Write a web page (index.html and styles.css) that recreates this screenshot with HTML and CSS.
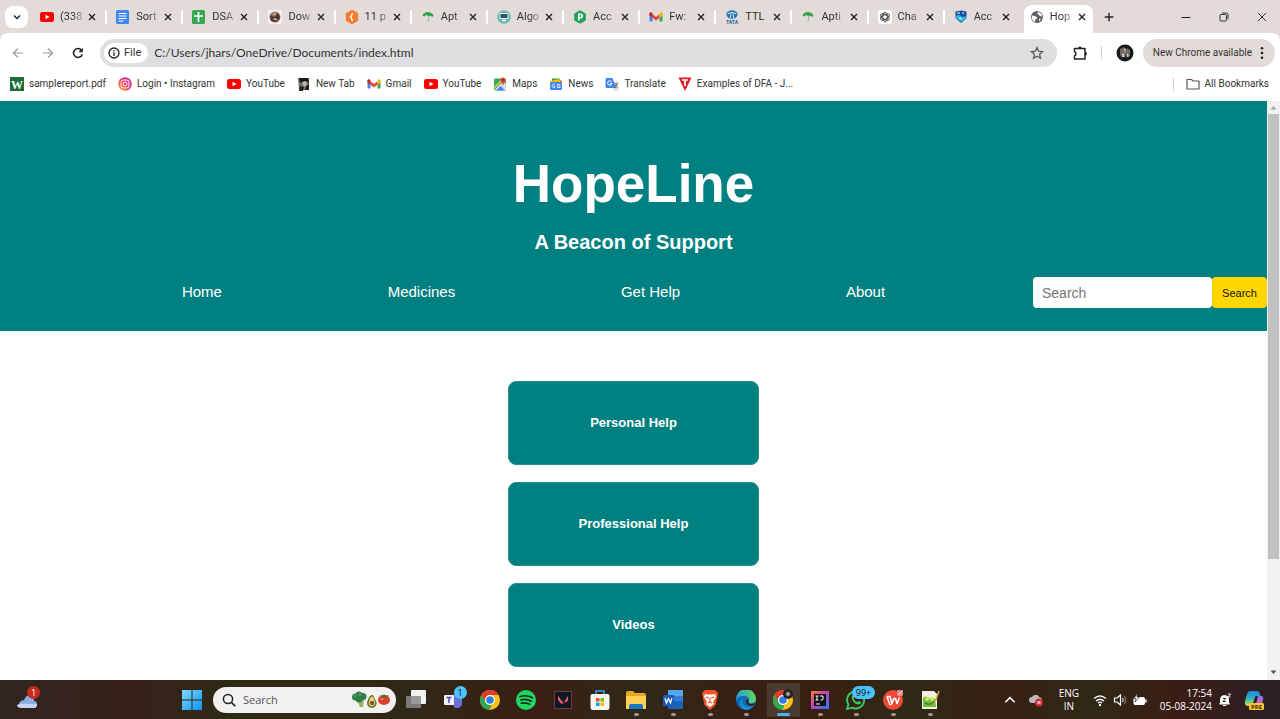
FILE: index.html
```html
<!DOCTYPE html>
<html lang="en">
<head>
<meta charset="utf-8">
<meta name="viewport" content="width=device-width, initial-scale=1">
<title>HopeLine</title>
<link rel="stylesheet" href="styles.css">
</head>
<body>
<svg class="defs" aria-hidden="true">
  <symbol id="close" viewBox="0 0 10 10"><path d="M2 2l6 6M8 2l-6 6" stroke="#222" stroke-width="1.4" fill="none"/></symbol>
  <symbol id="youtube" viewBox="0 0 14 14"><rect y="2" width="14" height="10" rx="2.5" fill="#f00"/><path d="M5.5 4.7v4.6L9.6 7z" fill="#fff"/></symbol>
  <symbol id="gmail" viewBox="0 0 14 14"><path d="M.5 3v7.700a.8.8 0 0 0 .8.8h2.200V5.200z" fill="#4285f4"/><path d="M13.500 3v7.700a.8.8 0 0 1-.8.8h-2.200V5.200z" fill="#34a853"/><path d="M3.500 4.200L7 6.900l3.500-2.700v3.600L7 10.500 3.500 7.800z" fill="#ea4335"/><path d="M.5 3.800c0-1.500 1.600-1.900 2.500-1.100l.5.400v4.700L.5 5.500z" fill="#c5221f"/><path d="M13.500 3.800c0-1.500-1.600-1.900-2.500-1.100l-.5.400v4.700l3-2.300z" fill="#fbbc04"/></symbol>
  <symbol id="umbrella" viewBox="0 0 14 14"><path d="M1.500 5.500C3 1.500 9 .5 12.500 5l-1 2-2.200-1.200-2 .7-2-1.700L3.500 6.500z" fill="#35a04b"/><path d="M7.800 5.500L7 12" stroke="#8cc59a" stroke-width="1"/></symbol>
  <symbol id="chrome" viewBox="0 0 20 20"><circle cx="10" cy="10" r="10" fill="#fbc116"/><path d="M1.340 5A10 10 0 0 1 18.660 5H10a5 5 0 0 0-4.400 7.400z" fill="#e33b2e"/><path d="M1.340 5l4.330 7.500A5 5 0 0 0 11.500 14.800L9.500 20A10 10 0 0 1 1.340 5z" fill="#2da94f"/><circle cx="10" cy="10" r="4.900" fill="#fff"/><circle cx="10" cy="10" r="3.800" fill="#2f7de9"/></symbol>
</svg>

<div class="frame">
<header class="tabstrip">
  <button class="tab-search" aria-label="Search tabs"><svg viewBox="0 0 10 10"><path d="M2 3.500l3 3 3-3" fill="none" stroke="#222" stroke-width="1.500"/></svg></button>
  <div class="tabs">
    <div class="tab"><svg class="fav"><use href="#youtube"/></svg><span class="tab-title">(338</span><button class="x" aria-label="Close tab"><svg><use href="#close"/></svg></button></div>
    <div class="tab"><svg class="fav" viewBox="0 0 14 14"><rect width="13" height="14" rx="1.500" fill="#4285f4"/><path d="M2.500 3.500h8M2.500 6h8M2.500 8.500h8M2.500 11h5" stroke="#fff" stroke-width="1.200"/></svg><span class="tab-title">Sort</span><button class="x" aria-label="Close tab"><svg><use href="#close"/></svg></button></div>
    <div class="tab"><svg class="fav" viewBox="0 0 14 14"><rect width="13" height="14" rx="1.500" fill="#34a853"/><path d="M6.500 2v10M2 6h9" stroke="#fff" stroke-width="1.700"/></svg><span class="tab-title">DSA</span><button class="x" aria-label="Close tab"><svg><use href="#close"/></svg></button></div>
    <div class="tab"><svg class="fav" viewBox="0 0 14 14"><rect width="14" height="14" rx="2" fill="#f4f1ef"/><circle cx="7" cy="7" r="5.500" fill="#9a7563"/><path d="M2 5l4 2 4-4 2 5-3 4-6-1z" fill="#4a3531"/><path d="M5 4l2-2 1 4zM4 9l4-1 2 3z" fill="#dba98a"/></svg><span class="tab-title">Dow</span><button class="x" aria-label="Close tab"><svg><use href="#close"/></svg></button></div>
    <div class="tab"><svg class="fav" viewBox="0 0 14 14"><path d="M7 .3l5.700 3v7.400L7 13.700l-5.700-3V3.300z" fill="#f57c35" stroke="#f57c35" stroke-linejoin="round"/><path d="M8 3.500C6 3.500 7.500 6 5.600 7 7.500 8 6 10.500 8 10.500" fill="none" stroke="#fff" stroke-width="1.400"/></svg><span class="tab-title">11 p</span><button class="x" aria-label="Close tab"><svg><use href="#close"/></svg></button></div>
    <div class="tab"><svg class="fav"><use href="#umbrella"/></svg><span class="tab-title">Apt</span><button class="x" aria-label="Close tab"><svg><use href="#close"/></svg></button></div>
    <div class="tab"><svg class="fav" viewBox="0 0 14 14"><circle cx="7" cy="7" r="6.800" fill="#65b9ac"/><rect x="2.500" y="3" width="9" height="6" rx=".7" fill="#e8f1f5"/><rect x="3.500" y="4" width="7" height="4" fill="#344f66"/><path d="M5 10.500h4" stroke="#fff" stroke-width="1.400"/></svg><span class="tab-title">Algo</span><button class="x" aria-label="Close tab"><svg><use href="#close"/></svg></button></div>
    <div class="tab"><svg class="fav" viewBox="0 0 14 14"><path d="M7 .8l5.300 2.900v6.600L7 13.200l-5.300-2.900V3.700z" fill="#20a35a" stroke="#20a35a" stroke-linejoin="round"/><path d="M5.800 10.500V4.300h1.700a1.500 1.500 0 0 1 0 3.400H5.800" fill="none" stroke="#fff" stroke-width="1.600"/></svg><span class="tab-title">Acc</span><button class="x" aria-label="Close tab"><svg><use href="#close"/></svg></button></div>
    <div class="tab"><svg class="fav"><use href="#gmail"/></svg><span class="tab-title">Fw:</span><button class="x" aria-label="Close tab"><svg><use href="#close"/></svg></button></div>
    <div class="tab"><svg class="fav" viewBox="0 0 14 14"><ellipse cx="7" cy="4.500" rx="5.500" ry="4.200" fill="#2679b8"/><path d="M3 3.500Q7 1.500 11 3.500M6 3.500L5.300 8M8 3.500L8.700 8" fill="none" stroke="#e2dbd8"/><text x="7" y="14" font-size="5" font-weight="bold" text-anchor="middle" fill="#1769aa">TATA</text></svg><span class="tab-title solid">TTL</span><button class="x" aria-label="Close tab"><svg><use href="#close"/></svg></button></div>
    <div class="tab"><svg class="fav"><use href="#umbrella"/></svg><span class="tab-title">Apti</span><button class="x" aria-label="Close tab"><svg><use href="#close"/></svg></button></div>
    <div class="tab"><svg class="fav" viewBox="0 0 14 14"><rect width="14" height="14" rx="3" fill="#fff"/><g fill="none" stroke="#444" stroke-width=".9"><ellipse cx="7" cy="7" rx="2.300" ry="4.800"/><ellipse cx="7" cy="7" rx="2.300" ry="4.800" transform="rotate(60 7 7)"/><ellipse cx="7" cy="7" rx="2.300" ry="4.800" transform="rotate(120 7 7)"/></g></svg><span class="tab-title">Cha</span><button class="x" aria-label="Close tab"><svg><use href="#close"/></svg></button></div>
    <div class="tab"><svg class="fav" viewBox="0 0 14 14"><path d="M1.500 1.500L7 .5l5.500 1v6.500L7 13 1.500 8z" fill="#174fa8"/><path d="M2 6q3-2 5 0t5 0v2L7 12 2 8z" fill="#25b9dd"/><path d="M3 3h3M8 3h2M5 8l3 1" stroke="#fff"/></svg><span class="tab-title">Acc</span><button class="x" aria-label="Close tab"><svg><use href="#close"/></svg></button></div>
    <div class="tab tab-active"><svg class="fav" viewBox="0 0 14 14"><circle cx="7" cy="7" r="6" fill="#5f6368"/><path d="M2 5.500c2 0 3 1 5 1.500 1 1-.5 2-1.500 2L5 12C2.500 11 1.500 9 2 5.500zM8 2c-1 1-.5 2 .5 2.500L10 6l2 .5C12 4 10.500 2.500 8 2zM9 9l2-.5-2 3z" fill="#fff"/></svg><span class="tab-title">Hop</span><button class="x" aria-label="Close tab"><svg><use href="#close"/></svg></button></div>
  </div>
  <div class="window-tools">
    <button aria-label="New tab"><svg viewBox="0 0 10 10"><path d="M5 .7v8.600M.7 5h8.600" stroke="#222" stroke-width="1.400"/></svg></button>
    <div class="window-buttons">
      <button aria-label="Minimize"><svg viewBox="0 0 10 10"><path d="M.5 5.500h9" stroke="#222"/></svg></button>
      <button aria-label="Restore"><svg viewBox="0 0 10 10" fill="none" stroke="#222" stroke-width=".9"><rect x="1" y="2.500" width="6.500" height="6.500" rx="1"/><path d="M3 1h4.500A1.500 1.500 0 0 1 9 2.500V7"/></svg></button>
      <button aria-label="Close window"><svg viewBox="0 0 10 10"><path d="M.8.8l8.400 8.400M9.200.8L.8 9.200" stroke="#222" stroke-width=".9"/></svg></button>
    </div>
  </div>
</header>

<div class="toolbar">
  <div class="nav-buttons">
    <button aria-label="Back"><svg viewBox="0 0 12 12" fill="none" stroke="#999" stroke-width="1.200"><path d="M11 6H1.500M6 1.500L1.500 6 6 10.500"/></svg></button>
    <button aria-label="Forward"><svg viewBox="0 0 12 12" fill="none" stroke="#999" stroke-width="1.200"><path d="M1 6h9.500M6 1.500L10.500 6 6 10.500"/></svg></button>
    <button aria-label="Reload"><svg viewBox="0 0 12 12"><path d="M10.300 7.200A4.500 4.500 0 1 1 9.600 3.200" fill="none" stroke="#222" stroke-width="1.500"/><path d="M10.900.8v4.400H6.500z" fill="#222"/></svg></button>
  </div>
  <div class="address">
    <button class="file-chip"><svg viewBox="0 0 12 12"><circle cx="6" cy="6" r="5" fill="none" stroke="#222" stroke-width="1.300"/><path d="M6 5.300V9M6 3v1.300" stroke="#222" stroke-width="1.300"/></svg>File</button>
    <input class="url" type="text" aria-label="Address" value="C:/Users/jhars/OneDrive/Documents/index.html">
    <button class="star" aria-label="Bookmark this page"><svg viewBox="0 0 14 14"><path d="M7 1.500l1.600 3.700 4 .4-3 2.700.9 4L7 10.200l-3.500 2.100.9-4-3-2.700 4-.4z" fill="none" stroke="#555" stroke-width="1.200"/></svg></button>
  </div>
  <button class="extensions" aria-label="Extensions"><svg viewBox="0 0 16 16"><path d="M2.500 3.500H13V14H2.500v-3.200c2-.5 2-3.600 0-4.100z" fill="none" stroke="#222" stroke-width="1.500" stroke-linejoin="round"/><path d="M6 3.500a1.900 1.900 0 0 1 3.800 0zM13 6.800a1.900 1.900 0 0 1 0 3.800z" fill="#222"/></svg></button>
  <span class="rule"></span>
  <button class="avatar" aria-label="Profile"><svg viewBox="0 0 18 18"><circle cx="9" cy="9" r="8.500" fill="#181818"/><path d="M4 5l4-2 1 5 2-4 3 2v6l-3 2-2-4-3 4-2-3z" fill="#74675f"/><path d="M6 10l2-1 1 4H6zM11 9l2 3-2 1z" fill="#a5d0d8"/><path d="M8 4l2 1-1 4z" fill="#ddd"/></svg></button>
  <button class="update">New Chrome available<svg viewBox="0 0 4 14" fill="#222"><circle cx="2" cy="2.300" r="1.300"/><circle cx="2" cy="7" r="1.300"/><circle cx="2" cy="11.700" r="1.300"/></svg></button>
</div>
</div>

<nav class="bookmarks" aria-label="Bookmarks">
  <a href="#"><svg viewBox="0 0 14 14"><rect width="14" height="14" fill="#1c6b3a"/><text x="7" y="11.500" text-anchor="middle" font-family="Liberation Serif, serif" font-weight="bold" font-size="12" fill="#fff">W</text></svg>samplereport.pdf</a>
  <a href="#"><svg viewBox="0 0 14 14"><defs><linearGradient id="ig" x1="0" y1="1" x2="1" y2="0"><stop stop-color="#ffc43d"/><stop offset=".45" stop-color="#f33a57"/><stop offset="1" stop-color="#a92bd0"/></linearGradient></defs><circle cx="7" cy="7" r="6.800" fill="url(#ig)"/><rect x="3" y="3" width="8" height="8" rx="2.500" fill="none" stroke="#fff"/><circle cx="7" cy="7" r="2" fill="none" stroke="#fff"/></svg>Login • Instagram</a>
  <a href="#"><svg><use href="#youtube"/></svg>YouTube</a>
  <a href="#"><svg viewBox="0 0 14 14"><path d="M1 1h11v12H2z" fill="#6f746e"/><path d="M2 1h9l1 5-4-2-5 2z" fill="#171918"/><path d="M5 5l4-1 1 4-3 2z" fill="#c5b29a"/><path d="M3 9l4 1-1 4H2zM9 9l3-2v6H8z" fill="#202522"/></svg>New Tab</a>
  <a href="#"><svg><use href="#gmail"/></svg>Gmail</a>
  <a href="#"><svg><use href="#youtube"/></svg>YouTube</a>
  <a href="#"><svg viewBox="0 0 14 14"><rect x="1" y="1.500" width="12" height="12" rx="1.500" fill="#34a853"/><path d="M1.500 13L10 4l3 3v5.500l-1 1z" fill="#d5dde3"/><path d="M3 13.500L7.500 9l4.500 4.500z" fill="#4285f4"/><path d="M1 11l9-9" stroke="#f4d14d" stroke-width="1.500"/><path d="M10 8.500C9.500 6 7.500 5.500 7.500 3a2.500 2.500 0 0 1 5 0c0 2.500-2 3-2.500 5.500z" fill="#ea4335"/><circle cx="10" cy="3" r=".9" fill="#8b1d1a"/></svg>Maps</a>
  <a href="#"><svg viewBox="0 0 14 14"><path d="M3 1.500h8v4H3z" fill="#34a853"/><path d="M1 4l10-2 2 3-11 2z" fill="#fbbc04"/><path d="M12 3l1 3-3 1z" fill="#ea4335"/><rect x="1" y="5" width="12" height="8" rx="1" fill="#4285f4"/><path d="M6 7.700A1.700 1.700 0 1 0 6.300 9.500H5M8 7.500h3.500M8 9h3.500M8 10.500h3.500" stroke="#fff" fill="none" stroke-width=".8"/></svg>News</a>
  <a href="#"><svg viewBox="0 0 14 14"><path d="M5 4h7.500a1 1 0 0 1 1 1v8.500H8z" fill="#d9dce0"/><path d="M1.500 1h6L11 11H1.500a1 1 0 0 1-1-1V2a1 1 0 0 1 1-1z" fill="#4285f4"/><path d="M6.500 4.500A2.200 2.200 0 1 0 7 6.500H5" stroke="#fff" fill="none"/><path d="M9 7h4M11 6v1M10 11l2-4M10 8l3 3" stroke="#666" stroke-width=".8"/></svg>Translate</a>
  <a href="#"><svg viewBox="0 0 14 14"><path d="M.5.5h13L7 14z" fill="#e01b22"/><path d="M4 3h6M7 3v6" stroke="#fff" stroke-width="1.700"/></svg>Examples of DFA - J...</a>
  <span class="rule all-rule"></span>
  <a href="#" class="all"><svg viewBox="0 0 14 14"><path d="M1 2.500h4.500L7 4h6v8H1z" fill="none" stroke="#555" stroke-width="1.200" stroke-linejoin="round"/></svg>All Bookmarks</a>
</nav>

<div class="viewport">
  <div class="site">
    <header class="hero">
      <h1>HopeLine</h1>
      <h2>A Beacon of Support</h2>
      <nav class="menu">
        <ul>
          <li><a href="#">Home</a></li>
          <li><a href="#">Medicines</a></li>
          <li><a href="#">Get Help</a></li>
          <li><a href="#">About</a></li>
        </ul>
        <form class="search">
          <input type="text" placeholder="Search" aria-label="Search the site">
          <button type="submit">Search</button>
        </form>
      </nav>
    </header>
    <main class="cards">
      <a class="card" href="#">Personal Help</a>
      <a class="card" href="#">Professional Help</a>
      <a class="card" href="#">Videos</a>
    </main>
  </div>
  <div class="scrollbar">
    <svg viewBox="0 0 13 13"><path d="M3.500 8.500h6l-3-3.500z" fill="#a3a3a3"/></svg>
    <div class="track"><div class="thumb"></div></div>
    <svg viewBox="0 0 13 13"><path d="M3.500 3.500h6l-3 3.500z" fill="#505050"/></svg>
  </div>
</div>

<footer class="taskbar">
  <div class="widgets"><button class="app" aria-label="Weather"><svg viewBox="0 0 20 20"><path d="M4 18a4 4 0 0 1 0-7c1-1 2-1 3-.5C8 6 12 4 15 7c2 1.500 2 3 2 4 4 0 4 7 0 7z" fill="#8fabe4"/><path d="M0 15c4-3 13 0 20-1 0 2-1 4-3 4H4c-2 0-4-1-4-3z" fill="#c6d5f8"/></svg><span class="badge red">1</span></button></div>
  <button class="app start" aria-label="Start"><svg viewBox="0 0 20 20"><defs><linearGradient id="win" x2="1" y2="1"><stop stop-color="#7fdcff"/><stop offset="1" stop-color="#0a92f2"/></linearGradient></defs><path d="M0 0h9.500v9.500H0zM10.500 0H20v9.500h-9.500zM0 10.500h9.500V20H0zM10.500 10.500H20V20h-9.500z" fill="url(#win)"/></svg></button>
  <label class="task-search">
    <svg class="lens" viewBox="0 0 14 14"><circle cx="6" cy="6" r="4.600" fill="none" stroke="#222" stroke-width="1.500"/><path d="M9.500 9.500l3.700 3.700" stroke="#222" stroke-width="1.700"/></svg>
    <input type="text" placeholder="Search" aria-label="Search Windows">
    <svg class="food" viewBox="0 0 40 18"><path d="M6 8l3 8h3l1-7z" fill="#87b95e"/><g fill="#2f7d4c"><circle cx="4.500" cy="6" r="3.500"/><circle cx="8" cy="4" r="3.500"/><circle cx="12" cy="5.500" r="3.500"/><circle cx="8" cy="8" r="3.500"/></g><g fill="#4b9c61"><circle cx="4" cy="5" r="1.500"/><circle cx="9" cy="3.500" r="1.700"/></g><path d="M21 4c2 0 2 3 4 6s-1 7-4 7-6-3-4.500-7S19 4 21 4z" fill="#58712a"/><path d="M21 5.500c1.500 0 2 3 3 5s-1 5-3 5-4-2-3-5 1.500-5 3-5z" fill="#ead982"/><circle cx="21" cy="12" r="2.300" fill="#88552a"/><ellipse cx="33" cy="9" rx="6" ry="5" fill="#d9412f"/><path d="M29 4l3 .7 1-2 1 2 4-.5-3 2.500-2-1-2 1.500z" fill="#3d7a35"/><ellipse cx="31" cy="8" rx="1.500" ry="1" fill="#f08c78"/></svg>
  </label>
  <div class="apps">
    <button class="app" aria-label="Task view"><svg viewBox="0 0 20 20"><rect x="5" y="0" width="15" height="14" rx="1" fill="#f1f1f1"/><rect x="0" y="6" width="15" height="12" rx="1" fill="#898989" opacity=".85"/></svg></button>
    <button class="app" aria-label="Teams"><svg viewBox="0 0 20 20"><circle cx="14" cy="6" r="3" fill="#7b83eb"/><path d="M7 8h12v6a5 5 0 0 1-8 3z" fill="#6870d7"/><rect x="1" y="5" width="10" height="10" rx="1" fill="#f2f1fb"/><path d="M3.500 7.500h5M6 7.500V13" stroke="#464eb8" stroke-width="1.500"/></svg><span class="badge blue">1</span></button>
    <button class="app" aria-label="Chrome"><svg><use href="#chrome"/></svg></button>
    <button class="app" aria-label="Spotify"><svg viewBox="0 0 20 20"><circle cx="10" cy="10" r="10" fill="#1ed760"/><path d="M4 6.500q6.500-2 12.500 1.300M4.700 10q5.500-1.600 10.500 1.200M5.300 13.200q4.500-1.200 8.500 1" stroke="#182a1d" stroke-width="1.700" stroke-linecap="round" fill="none"/></svg></button>
    <button class="app" aria-label="Valorant"><svg viewBox="0 0 20 20"><rect x="1.500" y="1.500" width="17" height="17" fill="#101823" stroke="#70343d"/><path d="M5 6l6 7.500H8L5 10zM15 6v4l-1.500 2H11z" fill="#ff5964"/></svg></button>
    <button class="app" aria-label="Microsoft Store"><svg viewBox="0 0 20 20"><path d="M6 5V1h8v4" fill="none" stroke="#38a9e8" stroke-width="1.500"/><rect x=".5" y="4" width="19" height="16" rx="2" fill="#f5f5f5"/><path d="M6 8h3.500v3.500H6z" fill="#f25022"/><path d="M10.500 8H14v3.500h-3.500z" fill="#7fba00"/><path d="M6 12.500h3.500V16H6z" fill="#00a4ef"/><path d="M10.500 12.500H14V16h-3.500z" fill="#ffb900"/></svg></button>
    <button class="app open" aria-label="File Explorer"><svg viewBox="0 0 20 20"><path d="M0 3q0-2 2-2h5l2 2h9q2 0 2 2v12H0z" fill="#e9a820"/><path d="M0 6h20v13H0z" fill="#ffd257"/><path d="M3 19v-3q0-2 2-2h10q2 0 2 2v3z" fill="#1678bd"/></svg></button>
    <button class="app open" aria-label="Word"><svg viewBox="0 0 20 20"><rect x="5" width="15" height="19" rx="1.500" fill="#1f60b8"/><path d="M5 0h15v6H5z" fill="#53a5ee"/><path d="M5 6h15v5H5z" fill="#347dd5"/><rect y="5" width="11" height="11" rx="1" fill="#185abd"/><path d="M2 8l1.500 5L5.500 8.500l2 4.500L9 8" stroke="#fff" stroke-width="1.200" fill="none"/></svg></button>
    <button class="app open" aria-label="Brave"><svg viewBox="0 0 20 20"><path d="M5 0h10l3 3-.5 3-2 9L10 20l-5.500-5-2-9L2 3z" fill="#fb542b"/><path d="M5 4l3 .5h4L15 4l1 3-3 5 1 2-4 3-4-3 1-2-3-5z" fill="#fff"/><path d="M6 7l3 1M14 7l-3 1M10 8v4l-2 1M10 12l2 1" stroke="#fb542b" stroke-width="1.200" fill="none"/></svg></button>
    <button class="app open" aria-label="Edge"><svg viewBox="0 0 20 20"><defs><linearGradient id="edge" x2="1"><stop stop-color="#249ed9"/><stop offset="1" stop-color="#61d75e"/></linearGradient></defs><circle cx="10" cy="10" r="10" fill="#1268b3"/><path d="M0 9a10 10 0 0 1 20 0c0 5-6 5-8 3 3-4-1-6-4-6C3 6 1 8 0 11z" fill="url(#edge)"/><path d="M7 8c-2 5 1 9 6 9 2 0 4-1 5-2-2 3-5 5-8 5C3 19 2 11 7 8z" fill="#1992d4"/><path d="M10.500 10c1-1 3-.5 2 1.200-1.500 2.300 3 3.800 6.500 1.800l-1 2c-5 2-9.500-2-7.500-5z" fill="#312018"/></svg></button>
    <button class="app open current" aria-label="Chrome, HopeLine"><svg><use href="#chrome"/></svg><span class="mini"></span></button>
    <button class="app open" aria-label="IntelliJ IDEA"><svg viewBox="0 0 20 20"><defs><linearGradient id="ij" x2="1" y2="1"><stop stop-color="#ff7a35"/><stop offset=".45" stop-color="#c542b8"/><stop offset="1" stop-color="#167dff"/></linearGradient></defs><rect x="1" y="1" width="18" height="18" fill="url(#ij)"/><rect x="4" y="4" width="12" height="12" fill="#111"/><path d="M5.500 6h3M7 6v4M5.500 10h3M10 6h3v3q0 1.500-2.500 1M6 14h4" stroke="#fff" fill="none"/></svg></button>
    <button class="app open" aria-label="WhatsApp"><svg viewBox="0 0 20 20"><path d="M1 19l1.400-4.500A8.500 8.500 0 1 1 6 17.700z" fill="none" stroke="#35cb66" stroke-width="1.900"/><path d="M6 6q1-1.500 2 .5l.5 1-1 1.200q1.300 2.500 3.800 3.600l1.300-1.300 2 1q1.400 1-1 2.300C9 15.500 4.500 9 6 6z" fill="#35cb66"/></svg><span class="badge blue wide">99+</span></button>
    <button class="app open" aria-label="WPS Office"><svg viewBox="0 0 20 20"><circle cx="10" cy="10" r="10" fill="#ef4937"/><path d="M4 6.500h3l2 7 1.800-5h1.700l1.500 5 2.500-6" fill="none" stroke="#fff" stroke-width="1.600" stroke-linejoin="round"/><path d="M4 6.500l2.800 8h2" fill="none" stroke="#fff" stroke-width="1.400" stroke-linejoin="round"/><rect x="14" y="0" width="6" height="6" rx="1" fill="#df8780"/><path d="M15.500 4.500l3-3" stroke="#fff"/></svg></button>
    <button class="app open" aria-label="Notepad++"><svg viewBox="0 0 20 20"><path d="M2 1h12l3 3v15H2z" fill="#f0f0dc"/><path d="M3 8q3-3 6 0t6 0l1 9H3z" fill="#73b93e"/><circle cx="7" cy="9" r="2" fill="#c9eb65"/><circle cx="12" cy="9" r="2" fill="#c9eb65"/><path d="M5 13q4 3 9-1" stroke="#31631e" fill="none"/><path d="M19 1l-4 11" stroke="#d9b24b" stroke-width="1.500"/></svg></button>
  </div>
  <div class="tray">
    <button class="t-chevron" aria-label="Hidden icons"><svg viewBox="0 0 12 12"><path d="M2 8l4-4 4 4" fill="none" stroke="#fff" stroke-width="1.300"/></svg></button>
    <button class="t-cloud" aria-label="OneDrive"><svg viewBox="0 0 14 14"><path d="M3 10a3 3 0 0 1 0-6c2-3 6-3 7 0 4 0 4 6 1 6z" fill="#b9b9b9"/><circle cx="10" cy="9.500" r="3.900" fill="#d12f3c"/><path d="M8.500 8l3 3M11.500 8l-3 3" stroke="#fff"/></svg></button>
    <button class="t-lang">ENG<br>IN</button>
    <button class="t-net" aria-label="Network, volume and battery">
      <svg viewBox="0 0 14 14"><path d="M1 5.500q6-5 12 0M3 8q4-3.500 8 0M5 10q2-1.700 4 0" fill="none" stroke="#fff" stroke-width="1.300"/><circle cx="7" cy="12" r="1.200" fill="#fff"/></svg>
      <svg viewBox="0 0 14 14"><path d="M1.500 5h2.500l3.500-3v10L4 9H1.500z" fill="none" stroke="#fff" stroke-width="1.200"/><path d="M9.500 5q1.500 2 0 4" stroke="#fff" fill="none"/><path d="M11.500 3q2.500 4 0 8" stroke="#888" fill="none"/></svg>
      <svg viewBox="0 0 14 14"><rect x="1" y="4.500" width="10.500" height="7" rx="1" fill="#fff" stroke="#fff"/><path d="M13 6.500v3" stroke="#fff" stroke-width="1.400"/><path d="M4 .5L1 5.500h2L2 9l4.500-5H4z" fill="#fff" stroke="#35261d" stroke-width=".7"/></svg>
    </button>
    <button class="t-clock">17:54<br>05-08-2024</button>
    <button class="t-bell" aria-label="Notifications"><svg viewBox="0 0 14 14"><path d="M2.500 10V6.500a4 4 0 0 1 8 0V10l1 1h-10zM5 12.500h3" fill="#fff" stroke="#fff"/><path d="M5 5.500h2.700L5 8.500h2.700" fill="none" stroke="#35261d"/><path d="M10 1h2.500L10 4h2.500" fill="none" stroke="#fff" stroke-width=".9"/></svg></button>
    <button class="t-copilot" aria-label="Copilot"><svg viewBox="0 0 20 20"><defs><linearGradient id="cp1" x2="0" y2="1"><stop stop-color="#2385e6"/><stop offset=".5" stop-color="#28b9bf"/><stop offset="1" stop-color="#d9d843"/></linearGradient><linearGradient id="cp2" x2="0" y2="1"><stop stop-color="#8d6df4"/><stop offset="1" stop-color="#f06c9a"/></linearGradient></defs><path d="M6 1h7q2 0 2.500 2l1 3h-5L8 16H4q-4 0-3-5l2-7q1-3 3-3z" fill="url(#cp1)"/><path d="M14 6h3q3 0 2 4l-1.500 5q-1 4-4 4H8q3 0 4-5z" fill="url(#cp2)"/><rect x="5" y="13" width="15" height="7" rx="1.500" fill="#f8c62c"/><text x="12.500" y="18.800" text-anchor="middle" font-size="6" font-weight="bold" fill="#342b18">PRE</text></svg></button>
  </div>
</footer>
</body>
</html>
```
FILE: styles.css
```css
* { box-sizing: border-box; }

body {
  margin: 0;
  min-height: 100vh;
  display: grid;
  grid-template-columns: minmax(0, 1fr);
  grid-template-rows: auto auto 1fr auto;
  background: #fff;
  color: #333;
  font: 11px/16px Roboto, "Noto Sans", sans-serif;
}

button, input { font: inherit; color: inherit; margin: 0; border: 0; padding: 0; background: none; }
button { display: flex; align-items: center; justify-content: center; }
a { color: inherit; text-decoration: none; }
svg { display: block; flex: none; }
.defs { position: absolute; width: 0; height: 0; }

/* Tab strip */
.frame { background: #e2dbd8; }
.tabstrip { display: flex; height: 33px; }
.tab-search { width: 23px; height: 22px; margin: 6px 3px 0 5px; border-radius: 8px; background: #fff; }
.tab-search svg { width: 10px; height: 10px; }
.tabs { flex: 1; display: flex; min-width: 0; }
.tab { flex: 1; min-width: 0; display: flex; align-items: center; padding: 0 10px 0 9px; position: relative; isolation: isolate; }
.tab::after { content: ""; position: absolute; right: 0; top: 10px; width: 2px; height: 14px; background: #fff; }
.fav { width: 14px; height: 14px; }
.tab-title { flex: 1; min-width: 0; margin-left: 6px; white-space: nowrap; mask-image: linear-gradient(to right, #000 45%, transparent); }
.solid { mask-image: none; }
.x svg { width: 10px; height: 10px; }
.tab-active::before { content: ""; position: absolute; z-index: -1; inset: 5px 4px 0 3px; border-radius: 8px 8px 0 0; background: #fff; }
.tab-active::after { display: none; }
.tab:nth-last-child(2)::after { display: none; }
.window-tools { width: 183px; display: flex; align-items: center; justify-content: space-between; padding: 0 13px 0 7px; }
.window-tools svg { width: 10px; height: 10px; }
.window-buttons { display: flex; gap: 28px; }

/* Toolbar */
.toolbar { display: flex; align-items: center; height: 39px; padding: 0 5px 0 12px; border-radius: 8px 8px 0 0; background: #fff; }
.nav-buttons { display: flex; gap: 18px; width: 73px; margin-right: 15px; }
.nav-buttons svg { width: 12px; height: 12px; }
.address { flex: 1; min-width: 0; display: flex; align-items: center; height: 28px; padding: 0 13px 0 4px; border-radius: 14px; background: #dfdfe1; }
.file-chip { height: 20px; padding: 0 7px 0 4px; gap: 4px; border-radius: 10px; background: #fff; }
.file-chip svg { width: 12px; height: 12px; }
.url { flex: 1; min-width: 0; margin-left: 6px; font-family: Lato, "Noto Sans", sans-serif; font-size: 12px; }
.star svg { width: 14px; height: 14px; }
.extensions { margin-left: 15px; }
.extensions svg { width: 16px; height: 16px; }
.rule { width: 1px; height: 13px; background: #d6cfcc; }
.toolbar .rule { margin: 0 14px 0 13px; }
.avatar svg { width: 18px; height: 18px; }
.update { height: 28px; margin-left: 9px; padding: 0 11px 0 10px; gap: 8px; border-radius: 14px; background: #e2dbd8; white-space: nowrap; }
.update svg { width: 4px; height: 14px; }
.update, .bookmarks { font-size: 10px; }

/* Bookmarks */
.bookmarks { display: flex; align-items: center; height: 29px; padding: 0 11px 5px 10px; gap: 12px; background: #fff; white-space: nowrap; }
.bookmarks a { display: flex; align-items: center; gap: 5px; }
.bookmarks svg { width: 14px; height: 14px; }
.all-rule { margin-left: auto; }

/* Web page */
.viewport { display: flex; font-family: "Liberation Sans", Arial, sans-serif; }
.site { flex: 1; min-width: 0; }
.hero { padding: 50px 0 23px; background: #008080; color: #fff; text-align: center; }
.hero h1 { margin: 0; font-size: 53px; line-height: 66px; }
.hero h2 { margin: 13px 0 23px; font-size: 20px; line-height: 24px; }
.menu { display: flex; align-items: flex-start; padding-left: 99px; }
.menu ul { flex: 1; display: flex; justify-content: space-around; margin: 0 65px 0 0; padding: 0; list-style: none; font-size: 15px; line-height: 30px; }
.search { display: flex; height: 31px; }
.search input { width: 179px; padding: 0 9px; border-radius: 4px; background: #fff; color: #333; font-size: 14px; }
.search input::placeholder { color: #757575; }
.search button { width: 55px; border-radius: 4px; background: #ffd700; color: #111; font-size: 11px; }
.cards { display: flex; flex-direction: column; align-items: center; gap: 17px; padding: 50px 20px 12px; }
.card { display: flex; align-items: center; justify-content: center; width: 251px; height: 84px; border: 1px solid #2c9090; border-radius: 8px; background: #008080; color: #fff; font-size: 13px; font-weight: bold; }
.scrollbar { width: 13px; display: flex; flex-direction: column; background: #f1f1f1; }
.scrollbar svg { width: 13px; height: 13px; }
.track { flex: 1; padding: 0 1px; }
.thumb { height: 80.5%; background: #c1c1c1; }

/* Taskbar */
.taskbar { display: flex; align-items: center; height: 39px; padding-right: 16px; color: #fff; font-family: "Open Sans", "Noto Sans", sans-serif; background: linear-gradient(to right, #30261f, #38201a 10%, #2f2917 18%, #302817 32%, #3a1e15 42%, #302918 50%, #381f15 58%, #38200f 64%, #2f2917 71%, #391f15 78%, #2f2817 85%, #3b1c15 92%, #292125); }
.app { position: relative; height: 39px; }
.app > svg { width: 20px; height: 20px; }
.widgets { width: 173px; padding-left: 17px; }
.start { width: 37px; }
.badge { position: absolute; top: 6px; left: 10px; min-width: 13px; height: 13px; border-radius: 7px; font-size: 9px; line-height: 13px; text-align: center; }
.red { background: #c42b1c; color: #fff; }
.blue { left: 19px; background: #4cc2ff; color: #111; }
.wide { left: 14px; width: 23px; }
.task-search { display: flex; align-items: center; width: 183px; height: 26px; margin: 0 2px 0 3px; padding: 0 5px 0 9px; border-radius: 13px; background: #f3f1ef; color: #444; }
.lens { width: 14px; height: 14px; }
.task-search input { flex: 1; min-width: 0; margin-left: 7px; }
.task-search input::placeholder { color: #555; }
.food { width: 40px; height: 18px; }
.apps { display: flex; width: 550px; }
.apps .app { flex: 1; }
.open::after { content: ""; position: absolute; bottom: 3px; left: 50%; width: 5px; height: 3px; margin-left: -2px; border-radius: 2px; background: #9d9590; }
.current { background: linear-gradient(#493a30, #493a30) center / 33px 34px no-repeat; }
.current::after { width: 13px; margin-left: -6px; background: #4cb5ec; }
.mini { position: absolute; top: 9px; left: 18px; width: 10px; height: 10px; border-radius: 5px; background: radial-gradient(#aaa 15%, #222 40%); }
.tray { display: flex; align-items: center; margin-left: auto; font-size: 10px; line-height: 13px; }
.tray svg { width: 14px; height: 14px; }
.t-cloud { margin-left: 12px; }
.t-lang { width: 26px; margin-left: 13px; }
.t-net { gap: 6px; margin-left: 11px; }
.t-clock { margin-left: 13px; text-align: right; }
.t-bell { margin-left: 6px; }
.t-copilot { margin-left: 12px; }
.tray .t-copilot svg { width: 20px; height: 20px; }
```
